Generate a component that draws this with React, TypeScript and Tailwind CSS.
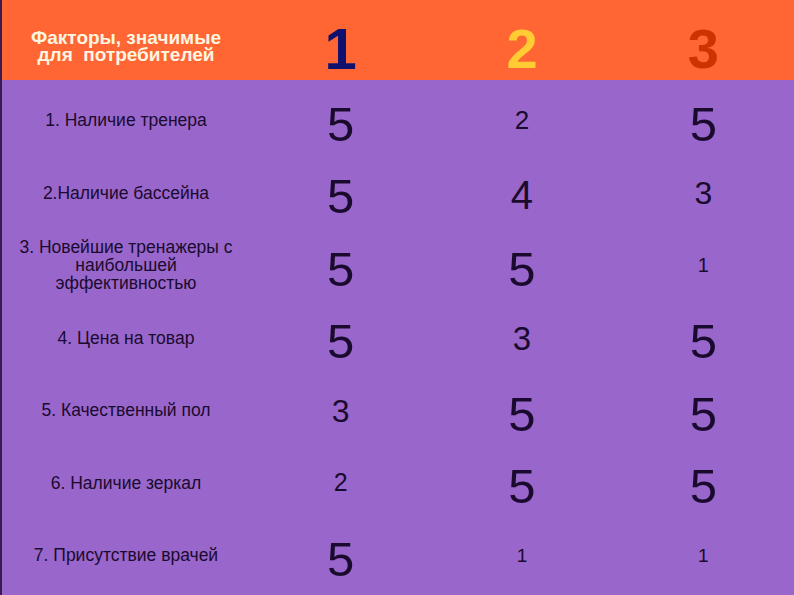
import React from "react";

type Cell = { v: string; cls: string };

const BIG = "text-[49px] pt-[16px]";

const rows: { label: React.ReactNode; cells: Cell[] }[] = [
  {
    label: "1. Наличие тренера",
    cells: [
      { v: "5", cls: BIG },
      { v: "2", cls: "text-[26px] pt-[8px]" },
      { v: "5", cls: BIG },
    ],
  },
  {
    label: "2.Наличие бассейна",
    cells: [
      { v: "5", cls: BIG },
      { v: "4", cls: "text-[40px] pt-[12px]" },
      { v: "3", cls: "text-[32px] pt-[9px]" },
    ],
  },
  {
    label: (
      <>
        3. Новейшие тренажеры с<br />
        наибольшей
        <br />
        эффективностью
      </>
    ),
    cells: [
      { v: "5", cls: BIG },
      { v: "5", cls: BIG },
      { v: "1", cls: "text-[20px] pt-[8px]" },
    ],
  },
  {
    label: "4. Цена на товар",
    cells: [
      { v: "5", cls: BIG },
      { v: "3", cls: "text-[33px] pt-[9px]" },
      { v: "5", cls: BIG },
    ],
  },
  {
    label: "5. Качественный пол",
    cells: [
      { v: "3", cls: "text-[32px] pt-[9px]" },
      { v: "5", cls: BIG },
      { v: "5", cls: BIG },
    ],
  },
  {
    label: "6. Наличие зеркал",
    cells: [
      { v: "2", cls: "text-[25px] pt-[8px]" },
      { v: "5", cls: BIG },
      { v: "5", cls: BIG },
    ],
  },
  {
    label: "7. Присутствие врачей",
    cells: [
      { v: "5", cls: BIG },
      { v: "1", cls: "text-[19px] pt-[8px]" },
      { v: "1", cls: "text-[19px] pt-[8px]" },
    ],
  },
];

export default function App() {
  return (
    <div
      className="w-[794px] h-[595px] overflow-hidden bg-[#9966cc] border-l-2 border-[#3a1c52] grid grid-cols-[248px_1fr_1fr_1fr] grid-rows-[80px_repeat(7,72.5px)] text-[#1a0b2e]"
      style={{ fontFamily: '"Liberation Sans", Arial, sans-serif' }}
    >
      <div className="bg-[#ff6633] flex items-center justify-center text-center text-[#fff6e2] font-bold text-[19px] leading-[17px] whitespace-pre pt-[12px]">
        {"Факторы, значимые\nдля  потребителей"}
      </div>
      <div className="bg-[#ff6633] flex items-center justify-center font-bold text-[58px] leading-none text-[#10106e] pt-[18px]">
        1
      </div>
      <div className="bg-[#ff6633] flex items-center justify-center font-bold text-[56px] leading-none text-[#ffcc33] pt-[18px]">
        2
      </div>
      <div className="bg-[#ff6633] flex items-center justify-center font-bold text-[56px] leading-none text-[#cc3300] pt-[18px]">
        3
      </div>
      {rows.map((r, i) => (
        <React.Fragment key={i}>
          <div className="flex items-center justify-center text-center text-[17.5px] leading-[18px] pt-[8px]">
            <span>{r.label}</span>
          </div>
          {r.cells.map((c, j) => (
            <div
              key={j}
              className={`flex items-center justify-center leading-none ${c.cls}`}
            >
              {c.v}
            </div>
          ))}
        </React.Fragment>
      ))}
    </div>
  );
}
